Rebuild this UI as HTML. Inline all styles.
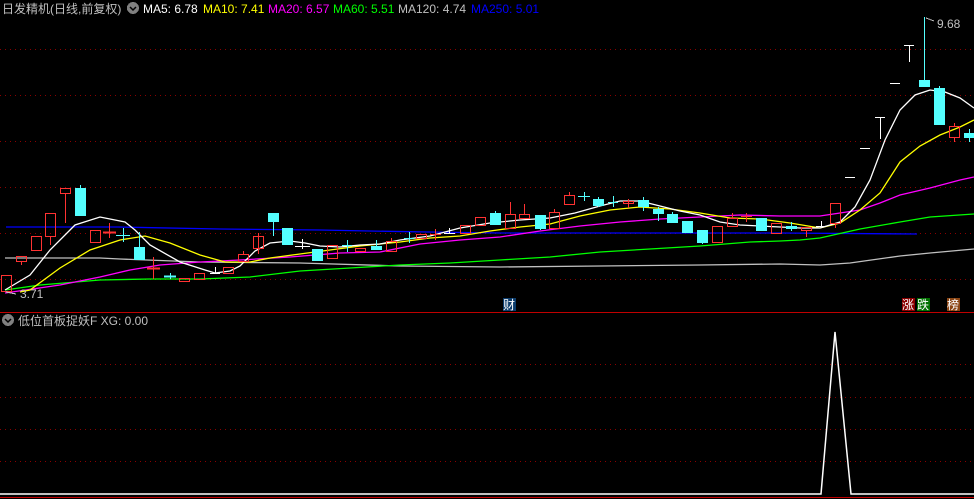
<!DOCTYPE html>
<html><head><meta charset="utf-8"><style>
body{margin:0;background:#000;width:974px;height:499px;overflow:hidden;font-family:"Liberation Sans","Noto Sans CJK SC",sans-serif}
svg{display:block}
text{font-family:"Liberation Sans","Noto Sans CJK SC",sans-serif;font-size:12px}
</style></head><body>
<svg width="974" height="499" viewBox="0 0 974 499" xmlns="http://www.w3.org/2000/svg" shape-rendering="crispEdges">
<g stroke="#8b0000" stroke-dasharray="1 4" stroke-width="1">
<line x1="0" y1="49.5" x2="974" y2="49.5"/><line x1="0" y1="95.5" x2="974" y2="95.5"/><line x1="0" y1="141.5" x2="974" y2="141.5"/><line x1="0" y1="187.5" x2="974" y2="187.5"/><line x1="0" y1="233.5" x2="974" y2="233.5"/><line x1="0" y1="279.5" x2="974" y2="279.5"/>
<line x1="0" y1="364.5" x2="974" y2="364.5"/><line x1="0" y1="397.5" x2="974" y2="397.5"/><line x1="0" y1="429.5" x2="974" y2="429.5"/><line x1="0" y1="461.5" x2="974" y2="461.5"/>
</g>
<line x1="0" y1="312.5" x2="974" y2="312.5" stroke="#c00000"/>
<line x1="0" y1="497.5" x2="974" y2="497.5" stroke="#c00000"/>
<g fill="none" stroke-width="1.3" shape-rendering="auto">
<polyline stroke="#0000ff" points="6,227 118,227 220,229 320,230 369,231 428,232 500,233 780,233 917,234"/>
<polyline stroke="#c0c0c0" points="5,258 100,258 120,259 200,262 300,263 400,266 500,267 600,266 700,265 780,264 820,265 850,263 900,256 930,253 974,249"/>
<polyline stroke="#00ff00" points="5,290 40,285 100,280 150,279 200,279 250,277 300,271 350,268 400,265 450,263 500,260 550,257 600,252 650,249 700,246 750,242 780,241 800,240 820,238 860,229 900,222 930,217 974,214"/>
<polyline stroke="#ff00ff" points="5,293 60,285 100,277 130,270 160,265 200,262 240,260 290,257 340,253 380,252 420,244 460,240 500,237 540,231 580,226 620,222 660,219 700,217 740,215 780,216 820,216 840,213 860,210 880,203 900,195 930,188 960,180 974,177"/>
<polyline stroke="#ffff00" points="20,292 30,290 60,268 90,250 120,240 145,236 170,243 200,255 225,262 250,262 270,258 300,254 330,250 360,246 400,242 430,238 460,236 490,231 520,227 550,224 580,216 610,210 640,207 670,209 700,213 730,218 760,219 790,223 820,228 840,223 860,210 880,193 900,162 920,146 940,135 960,127 974,120"/>
<polyline stroke="#ffffff" points="5,290 30,275 50,250 75,225 100,217 125,222 135,230 150,245 180,262 205,270 215,273 230,271 240,266 255,251 270,243 290,241 305,243 320,246 340,247 360,245 380,244 400,240 430,236 460,228 490,223 520,220 550,218 575,213 600,206 620,201 640,201 660,206 680,211 700,215 720,222 740,225 760,226 780,227 800,228 820,228 840,222 855,207 870,180 885,140 900,110 915,95 930,90 945,92 960,98 974,108"/>
</g>
<g stroke-width="1">
<!-- red hollow candles: x,top,bottom,wicktop,wickbottom -->
<g fill="none" stroke="#ff3232">
<rect x="1.5" y="275.5" width="10" height="16"/>
<rect x="16.5" y="256.5" width="10" height="5"/><line x1="21.5" y1="261" x2="21.5" y2="265"/>
<rect x="31.5" y="236.5" width="10" height="14"/>
<rect x="45.5" y="213.5" width="10" height="23"/><line x1="50.5" y1="236" x2="50.5" y2="245"/>
<rect x="60.5" y="188.5" width="10" height="5"/><line x1="65.5" y1="193" x2="65.5" y2="223"/>
<rect x="90.5" y="230.5" width="10" height="12"/>
<line x1="103" y1="232.5" x2="116" y2="232.5" stroke-width="2"/><line x1="109.5" y1="223" x2="109.5" y2="238"/>
<line x1="147" y1="268.5" x2="160" y2="268.5" stroke-width="2"/><line x1="153.5" y1="257" x2="153.5" y2="279"/>
<rect x="179.5" y="278.5" width="10" height="3"/>
<rect x="194.5" y="273.5" width="10" height="6"/>
<rect x="223.5" y="267.5" width="10" height="6"/>
<rect x="238.5" y="254.5" width="10" height="7"/><line x1="243.5" y1="251" x2="243.5" y2="254"/>
<rect x="253.5" y="236.5" width="10" height="12"/><line x1="258.5" y1="233" x2="258.5" y2="254"/>
<rect x="327.5" y="245.5" width="10" height="13"/>
<rect x="355.5" y="248.5" width="10" height="3"/>
<rect x="386.5" y="241.5" width="10" height="10"/><line x1="391.5" y1="238" x2="391.5" y2="241"/>
<rect x="416.5" y="234.5" width="10" height="4"/>
<line x1="430" y1="234.5" x2="441" y2="234.5"/><line x1="435.5" y1="229" x2="435.5" y2="240"/>
<rect x="460.5" y="225.5" width="10" height="8"/>
<rect x="475.5" y="217.5" width="10" height="8"/>
<rect x="505.5" y="214.5" width="10" height="14"/><line x1="510.5" y1="202" x2="510.5" y2="214"/>
<rect x="519.5" y="214.5" width="10" height="4"/><line x1="524.5" y1="204" x2="524.5" y2="214"/>
<rect x="549.5" y="212.5" width="10" height="16"/><line x1="554.5" y1="209" x2="554.5" y2="212"/>
<rect x="564.5" y="195.5" width="10" height="9"/><line x1="569.5" y1="192" x2="569.5" y2="195"/>
<rect x="623.5" y="201.5" width="10" height="2"/><line x1="628.5" y1="199" x2="628.5" y2="208"/>
<rect x="712.5" y="226.5" width="10" height="16"/>
<rect x="727.5" y="218.5" width="10" height="8"/><line x1="732.5" y1="213" x2="732.5" y2="218"/>
<line x1="741" y1="216.5" x2="752" y2="216.5"/><line x1="746.5" y1="213" x2="746.5" y2="222"/>
<rect x="771.5" y="223.5" width="10" height="10"/>
<rect x="801.5" y="227.5" width="10" height="3"/><line x1="806.5" y1="230" x2="806.5" y2="237"/>
<rect x="830.5" y="203.5" width="10" height="20"/><line x1="835.5" y1="223" x2="835.5" y2="228"/>
<rect x="949.5" y="126.5" width="10" height="11"/><line x1="954.5" y1="123" x2="954.5" y2="126"/><line x1="954.5" y1="137" x2="954.5" y2="142"/>
</g>
<g fill="#54ffff" stroke="#54ffff">
<rect x="75.5" y="188.5" width="10" height="27"/><line x1="80.5" y1="185" x2="80.5" y2="188"/>
<line x1="116" y1="235.5" x2="130" y2="235.5"/><line x1="123.5" y1="228" x2="123.5" y2="242"/>
<rect x="134.5" y="247.5" width="10" height="12"/><line x1="139.5" y1="232" x2="139.5" y2="247"/>
<line x1="164" y1="276.5" x2="176" y2="276.5" stroke-width="2"/><line x1="170.5" y1="273" x2="170.5" y2="279"/>
<rect x="268.5" y="213.5" width="10" height="8"/><line x1="273.5" y1="221" x2="273.5" y2="236"/>
<rect x="282.5" y="228.5" width="10" height="16"/>
<rect x="312.5" y="249.5" width="10" height="11"/>
<line x1="342" y1="245.5" x2="352" y2="245.5"/><line x1="347.5" y1="240" x2="347.5" y2="252"/>
<rect x="371.5" y="246.5" width="10" height="3"/><line x1="376.5" y1="240" x2="376.5" y2="246"/>
<line x1="404" y1="238.5" x2="414" y2="238.5"/><line x1="409.5" y1="232" x2="409.5" y2="243"/>
<rect x="490.5" y="213.5" width="10" height="11"/><line x1="495.5" y1="211" x2="495.5" y2="213"/>
<rect x="535.5" y="215.5" width="10" height="13"/><line x1="540.5" y1="228" x2="540.5" y2="230"/>
<line x1="578" y1="196.5" x2="590" y2="196.5"/><line x1="584.5" y1="192" x2="584.5" y2="201"/>
<rect x="593.5" y="199.5" width="10" height="6"/><line x1="598.5" y1="197" x2="598.5" y2="207"/>
<line x1="608" y1="202.5" x2="618" y2="202.5"/><line x1="613.5" y1="196" x2="613.5" y2="207"/>
<rect x="638.5" y="200.5" width="10" height="6"/><line x1="643.5" y1="197" x2="643.5" y2="211"/>
<rect x="653.5" y="209.5" width="10" height="4"/><line x1="658.5" y1="207" x2="658.5" y2="221"/>
<rect x="667.5" y="214.5" width="10" height="8"/><line x1="672.5" y1="212" x2="672.5" y2="223"/>
<rect x="682.5" y="221.5" width="10" height="11"/>
<rect x="697.5" y="230.5" width="10" height="12"/><line x1="702.5" y1="242" x2="702.5" y2="244"/>
<rect x="756.5" y="218.5" width="10" height="12"/>
<rect x="786.5" y="226.5" width="10" height="2"/><line x1="791.5" y1="222" x2="791.5" y2="231"/>
<rect x="919.5" y="80.5" width="10" height="6"/><line x1="924.5" y1="17" x2="924.5" y2="80"/>
<rect x="934.5" y="88.5" width="10" height="36"/><line x1="939.5" y1="86" x2="939.5" y2="88"/>
<rect x="964.5" y="133.5" width="10" height="4"/><line x1="969.5" y1="129" x2="969.5" y2="142"/>
</g>
<g stroke="#ffffff" fill="none">
<line x1="210" y1="273.5" x2="220" y2="273.5"/><line x1="215.5" y1="267" x2="215.5" y2="273"/>
<line x1="295" y1="246.5" x2="310" y2="246.5"/><line x1="302.5" y1="239" x2="302.5" y2="249"/>
<line x1="444" y1="233.5" x2="455" y2="233.5"/><line x1="449.5" y1="228" x2="449.5" y2="233"/>
<line x1="816" y1="226.5" x2="826" y2="226.5"/><line x1="821.5" y1="221" x2="821.5" y2="226"/>
<line x1="845" y1="177.5" x2="855" y2="177.5"/>
<line x1="860" y1="148.5" x2="870" y2="148.5"/>
<line x1="875" y1="117.5" x2="885" y2="117.5"/><line x1="880.5" y1="117" x2="880.5" y2="139"/>
<line x1="890" y1="83.5" x2="900" y2="83.5"/>
<line x1="904" y1="45.5" x2="914" y2="45.5"/><line x1="909.5" y1="45" x2="909.5" y2="62"/>
</g>
</g>
<polyline fill="none" stroke="#ffffff" stroke-width="1.5" points="0,494 821,494 835,332 851,494 974,494" shape-rendering="auto"/>
<line x1="926" y1="18" x2="934" y2="21" stroke="#c0c0c0"/>
<text x="937" y="28" fill="#c0c0c0">9.68</text>
<line x1="6" y1="292" x2="16" y2="294" stroke="#c0c0c0"/>
<text x="20" y="298" fill="#c0c0c0">3.71</text>
<text x="2" y="13" fill="#c0c0c0">日发精机(日线,前复权)</text>
<circle cx="133" cy="8" r="6" fill="#808080"/><path d="M130 7 L133 10 L136 7" stroke="#000" fill="none" stroke-width="1.5" shape-rendering="auto"/>
<text x="143" y="13" fill="#ffffff">MA5: 6.78</text>
<text x="203" y="13" fill="#ffff00">MA10: 7.41</text>
<text x="268" y="13" fill="#ff00ff">MA20: 6.57</text>
<text x="333" y="13" fill="#00ff00">MA60: 5.51</text>
<text x="398" y="13" fill="#c0c0c0">MA120: 4.74</text>
<text x="471" y="13" fill="#0000ff">MA250: 5.01</text>
<circle cx="8" cy="320" r="6" fill="#808080"/><path d="M5 319 L8 322 L11 319" stroke="#000" fill="none" stroke-width="1.5" shape-rendering="auto"/>
<text x="18" y="325" fill="#c0c0c0">低位首板捉妖F  XG: 0.00</text>
<rect x="503" y="298" width="13" height="13" fill="#0c3c6c"/><text x="503" y="309" fill="#fff" font-size="11">财</text>
<rect x="902" y="298" width="13" height="13" fill="#8b0000"/><text x="902" y="309" fill="#fff" font-size="11">涨</text>
<rect x="917" y="298" width="13" height="13" fill="#007000"/><text x="917" y="309" fill="#fff" font-size="11">跌</text>
<rect x="947" y="298" width="13" height="13" fill="#8b4513"/><text x="947" y="309" fill="#fff" font-size="11">榜</text>
</svg>
</body></html>
